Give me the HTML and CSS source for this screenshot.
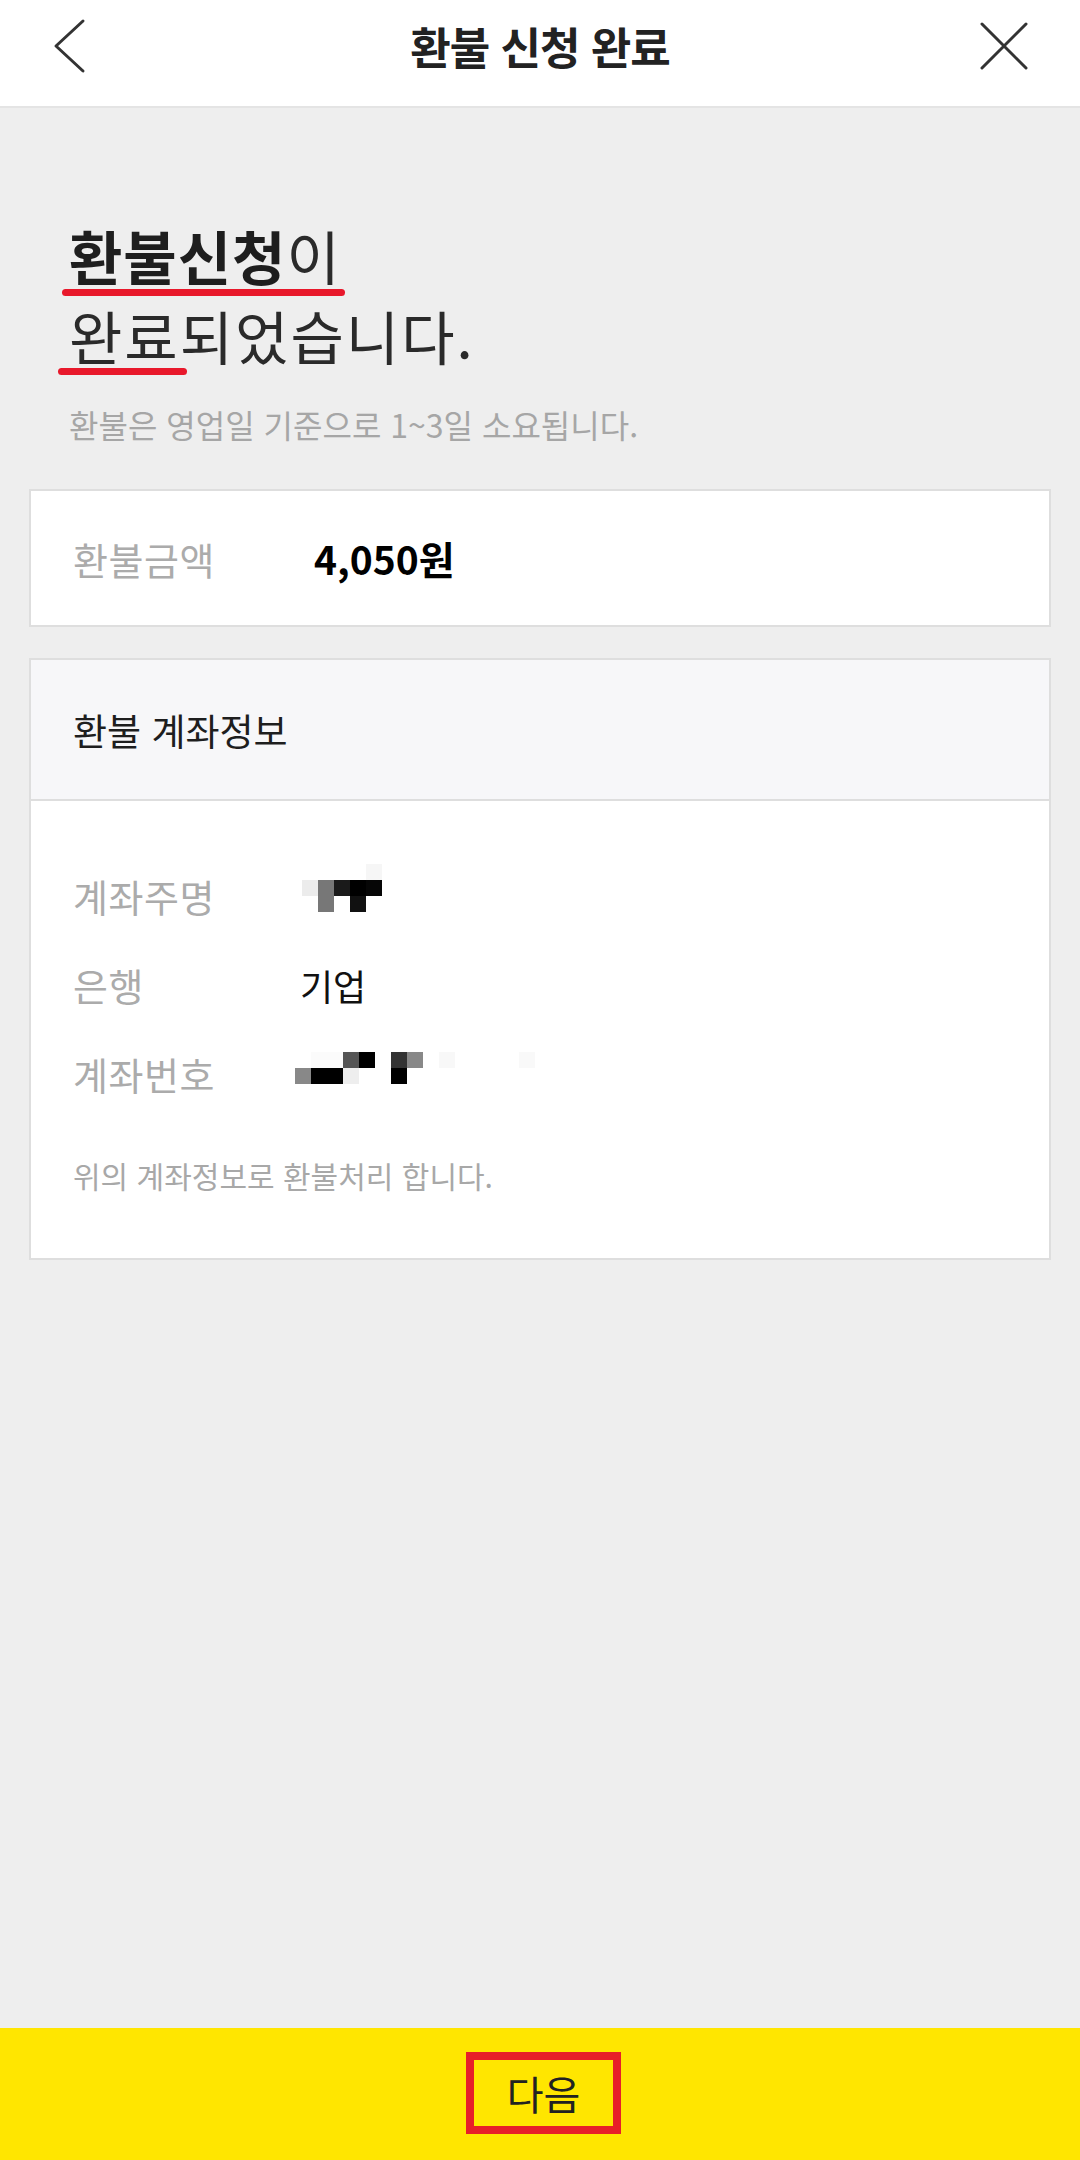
FILE: index.html
```html
<!DOCTYPE html>
<html lang="ko">
<head>
<meta charset="utf-8">
<title>환불 신청 완료</title>
<link rel="stylesheet" href="styles.css">
</head>
<body>
<div class="page">
  <header class="topbar">
    <button class="icon-btn back" aria-label="뒤로">
      <svg width="40" height="56" viewBox="0 0 40 56"><polyline points="33,3 6,28 33,53" fill="none" stroke="#333" stroke-width="3" stroke-linecap="round" stroke-linejoin="round"/></svg>
    </button>
    <h1 class="title">환불 신청 완료</h1>
    <button class="icon-btn close" aria-label="닫기">
      <svg width="52" height="52" viewBox="0 0 52 52"><path d="M4 4 L48 48 M48 4 L4 48" fill="none" stroke="#333" stroke-width="3" stroke-linecap="round"/></svg>
    </button>
  </header>

  <main class="content">
    <section class="intro">
      <p class="headline">
        <span class="line"><span class="mark mark-one"><strong>환불신청</strong>이</span></span>
        <span class="line line-two"><span class="mark mark-two">완료</span>되었습니다.</span>
      </p>
      <p class="sub">환불은 영업일 기준으로 1~3일 소요됩니다.</p>
    </section>

    <section class="card amount">
      <span class="label">환불금액</span>
      <span class="amount-value">4,050원</span>
    </section>

    <section class="card account">
      <div class="account-head">환불 계좌정보</div>
      <div class="account-body">
        <div class="row">
          <span class="label">계좌주명</span>
          <svg class="pix pix-name" width="80" height="48" viewBox="0 0 80 48">
            <rect x="64" y="0" width="16" height="16" fill="#f6f6f6"/>
            <rect x="0" y="16" width="16" height="16" fill="#ececec"/>
            <rect x="16" y="16" width="16" height="16" fill="#777"/>
            <rect x="32" y="16" width="16" height="16" fill="#1a1a1a"/>
            <rect x="48" y="16" width="16" height="16" fill="#000"/>
            <rect x="64" y="16" width="16" height="16" fill="#060606"/>
            <rect x="16" y="32" width="16" height="16" fill="#777"/>
            <rect x="48" y="32" width="16" height="16" fill="#111"/>
          </svg>
        </div>
        <div class="row">
          <span class="label">은행</span>
          <span class="value">기업</span>
        </div>
        <div class="row">
          <span class="label">계좌번호</span>
          <svg class="pix pix-num" width="240" height="32" viewBox="0 0 240 32">
            <rect x="16" y="0" width="32" height="16" fill="#fbfbfb"/>
            <rect x="48" y="0" width="16" height="16" fill="#555"/>
            <rect x="64" y="0" width="16" height="16" fill="#000"/>
            <rect x="96" y="0" width="16" height="16" fill="#333"/>
            <rect x="112" y="0" width="16" height="16" fill="#888"/>
            <rect x="144" y="0" width="16" height="16" fill="#f8f8f8"/>
            <rect x="224" y="0" width="16" height="16" fill="#f9f9f9"/>
            <rect x="0" y="16" width="16" height="16" fill="#888"/>
            <rect x="16" y="16" width="32" height="16" fill="#000"/>
            <rect x="48" y="16" width="16" height="16" fill="#eee"/>
            <rect x="96" y="16" width="16" height="16" fill="#000"/>
          </svg>
        </div>
        <p class="note">위의 계좌정보로 환불처리 합니다.</p>
      </div>
    </section>
  </main>

  <footer class="bottom">
    <button class="next">다음</button>
  </footer>
</div>
</body>
</html>
```

FILE: styles.css
```css
* { box-sizing: border-box; }

html, body {
  margin: 0;
  padding: 0;
}

body {
  font-family: "Noto Sans CJK KR", "Noto Sans", sans-serif;
  color: #222;
  background: #eeeeee;
}

.page {
  width: 1080px;
  height: 2160px;
  display: flex;
  flex-direction: column;
  background: #eeeeee;
}

/* Header */
.topbar {
  height: 108px;
  background: #fff;
  border-bottom: 2px solid #e4e4e4;
  display: grid;
  grid-template-columns: 140px 1fr 140px;
  align-items: center;
  padding-bottom: 14px;
}

.icon-btn {
  background: none;
  border: 0;
  padding: 0;
  display: flex;
  align-items: center;
  height: 60px;
}

.back { justify-content: flex-start; padding-left: 50px; }
.close { justify-content: flex-end; padding-right: 50px; }

.title {
  margin: 0;
  text-align: center;
  font-size: 44px;
  font-weight: 700;
  line-height: 60px;
  color: #222;
  letter-spacing: -1px;
}

/* Content */
.content {
  flex: 1;
  padding: 107px 29px 0;
  display: flex;
  flex-direction: column;
}

.intro {
  padding-left: 40px;
}

.headline {
  margin: 0;
  font-size: 58px;
  line-height: 80px;
  color: #2a2a2a;
  font-weight: 400;
  letter-spacing: 1px;
}

.headline .line { display: block; }
.headline .line-two { letter-spacing: 2px; }

.headline strong { font-weight: 700; color: #1e1e1e; }

.mark {
  position: relative;
  display: inline-block;
}

.mark::after {
  content: "";
  position: absolute;
  height: 7px;
  border-radius: 4px;
  background: #e8182b;
}

.mark-one::after { left: -7px; right: -4px; top: 74px; }
.mark-two::after { left: -11px; right: -7px; top: 73px; }

.sub {
  margin: 29px 0 0;
  font-size: 32px;
  line-height: 40px;
  color: #a6a6a6;
}

/* Cards */
.card {
  background: #fff;
  border: 2px solid #dedede;
}

.amount {
  margin-top: 45px;
  height: 138px;
  display: flex;
  align-items: center;
  padding-left: 42px;
}

.label {
  width: 227px;
  flex: none;
  font-size: 38px;
  color: #ababab;
  letter-spacing: 0.5px;
}

.amount .label { width: 241px; }

.amount-value {
  font-size: 39px;
  font-weight: 700;
  color: #000;
}

.account {
  margin-top: 31px;
}

.account-head {
  height: 141px;
  background: #f7f7f9;
  border-bottom: 2px solid #dedede;
  display: flex;
  align-items: center;
  padding-left: 42px;
  font-size: 37px;
  color: #1e1e1e;
}

.account-body {
  padding: 50px 42px 63px;
}

.row {
  height: 89px;
  display: flex;
  align-items: center;
}

.value {
  font-size: 36px;
  color: #111;
}

.pix { display: block; flex: none; }
.pix-name { align-self: flex-start; margin-top: 13px; margin-left: 2px; }
.pix-num { align-self: flex-start; margin-top: 23px; margin-left: -5px; }

.note {
  margin: 37px 0 0;
  font-size: 30px;
  line-height: 40px;
  color: #a8a8a8;
}

/* Bottom button */
.bottom {
  height: 132px;
  background: #ffe600;
  display: flex;
  justify-content: center;
  align-items: center;
  padding-bottom: 2px;
}

.next {
  width: 155px;
  height: 82px;
  border: 8px solid #e71f28;
  background: transparent;
  font-family: "Noto Sans CJK KR", sans-serif;
  font-size: 40px;
  color: #222;
  padding: 0;
  margin-left: 7px;
}
```
